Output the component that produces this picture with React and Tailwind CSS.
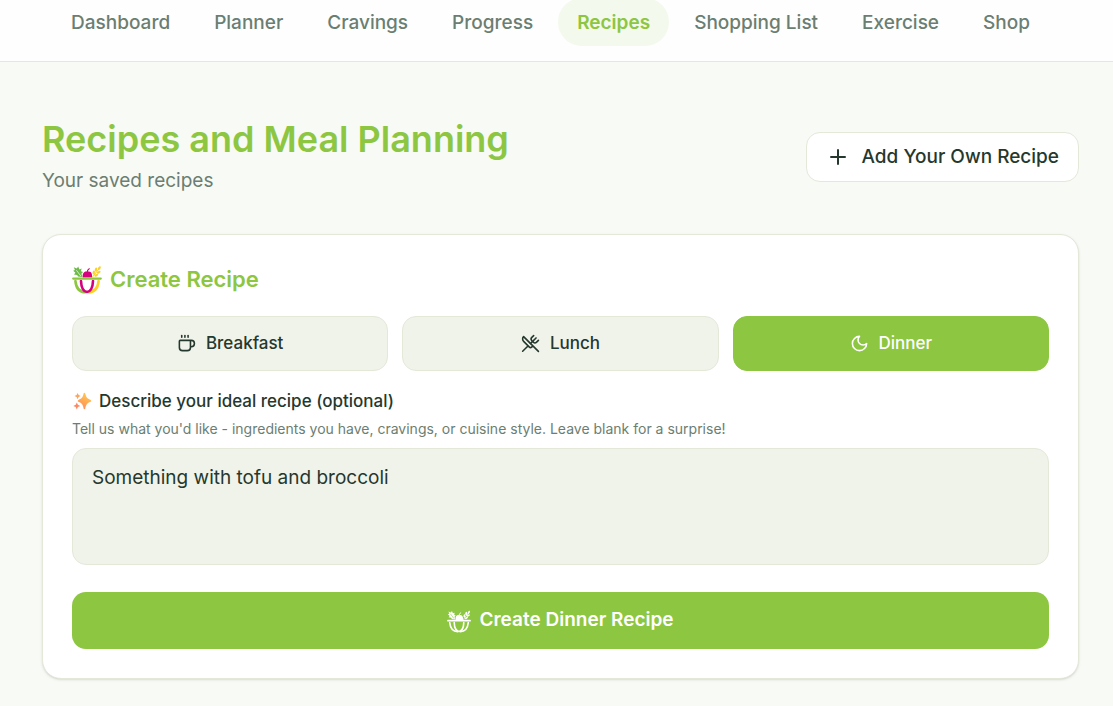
import React, { useState } from 'react';
import { Coffee, Plus, UtensilsCrossed } from 'lucide-react';

const navItems = ['Dashboard', 'Planner', 'Cravings', 'Progress', 'Recipes', 'Shopping List', 'Exercise', 'Shop'];

const MoonIcon = ({ className }) => (
  <svg
    viewBox="0 0 24 24"
    fill="none"
    stroke="currentColor"
    strokeWidth="2"
    strokeLinecap="round"
    strokeLinejoin="round"
    className={className}
    aria-hidden="true"
  >
    <path d="M12 3a6 6 0 0 0 9 9 9 9 0 1 1-9-9Z" />
  </svg>
);

const BowlIcon = ({ className, mono }) => {
  const green = mono ? 'white' : '#8dc63f';
  const leaf = mono ? 'white' : '#6cbb45';
  const pink = mono ? 'white' : '#d6007e';
  const yellow = mono ? 'white' : '#fdd028';
  const vein = mono ? '#8dc641' : 'white';
  const stroke = mono ? 2 : 2.6;
  return (
    <svg viewBox="0 0 30 30" fill="none" className={className} aria-hidden="true">
      {/* leaves */}
      <path
        d="M10.5 13 6 12.6 5.2 11 2 10.4 3.4 8.8 1.2 6.7 2.9 6 1.8 3.2 4.8 4.4 6.2 2.6 7.4 5.4 9.6 4.6 9 7.2 11 8 9.4 9.8Z"
        fill={leaf}
      />
      <path d="m4.4 6.2 4.4 5.8" stroke={vein} strokeWidth="0.7" />
      {/* wheat */}
      <path d="M20.5 13 27 4.9" stroke={yellow} strokeWidth="1" strokeLinecap="round" />
      <g fill={yellow}>
        <ellipse cx="27.3" cy="4.2" rx="1.2" ry="2.2" transform="rotate(30 27.3 4.2)" />
        <ellipse cx="24" cy="5.6" rx="1.2" ry="2.1" transform="rotate(10 24 5.6)" />
        <ellipse cx="21.8" cy="8.6" rx="1.2" ry="2.1" transform="rotate(5 21.8 8.6)" />
        <ellipse cx="26.7" cy="8.2" rx="1.1" ry="2.1" transform="rotate(60 26.7 8.2)" />
        <ellipse cx="24.3" cy="11.2" rx="1.1" ry="2.1" transform="rotate(60 24.3 11.2)" />
      </g>
      {/* fruit */}
      <path
        d="M10.8 13.6c-.6-3.8 1.1-6.2 3.4-6.1.5 0 .8.2 1.2.3.5-.2 1-.4 1.6-.3 2.3.1 3.6 2.8 2.9 6.1Z"
        fill={pink}
      />
      <path d="M15.2 8.2c0-1.7.7-2.8 2-3.5" stroke={pink} strokeWidth="1.2" strokeLinecap="round" />
      {/* bowl */}
      <path d="M3.4 17c.7 7 4.4 11.1 10 11.3" stroke={green} strokeWidth={stroke} strokeLinecap="round" />
      <path d="M26.6 17c-.7 7-4.4 11.1-10 11.3" stroke={yellow} strokeWidth={stroke} strokeLinecap="round" />
      <path
        d="M9 17c.2 5.4 1.8 10.4 6 11 4.2-.6 5.8-5.6 6-11"
        stroke={pink}
        strokeWidth={stroke}
        strokeLinecap="round"
        strokeLinejoin="round"
      />
      {mono && <path d="M15 17v10" stroke={vein} strokeWidth="1" />}
      <path d="M1.2 14.6h27.6" stroke={green} strokeWidth="2.2" strokeLinecap="round" />
    </svg>
  );
};

const SparklesEmoji = ({ className }) => (
  <svg viewBox="0 0 20 20" className={className} aria-hidden="true">
    <defs>
      <linearGradient id="sparkle" x1="0.7" y1="0" x2="0.2" y2="1">
        <stop offset="0" stopColor="#ffcb4c" />
        <stop offset="1" stopColor="#ff8a5c" />
      </linearGradient>
    </defs>
    <path
      d="M12.4 1.8c.5 0 .8.3.9.8.7 3.4 1.7 5 5.3 6.3.9.3.9 1.6 0 1.9-3.6 1.3-4.6 3-5.3 6.6-.2 1-1.5 1-1.7 0-.7-3.6-1.6-5.3-5.2-6.6-.9-.3-.9-1.6 0-1.9 3.6-1.3 4.5-2.9 5.2-6.3.1-.5.4-.8.8-.8Z"
      fill="url(#sparkle)"
    />
    <path d="m5.6 2 1 2.1 2.1 1-2.1 1-1 2.1-1-2.1-2.1-1 2.1-1Z" fill="#fba45c" />
    <path d="m4.8 11.4 1.1 2.4 2.4 1.1-2.4 1.1-1.1 2.4-1.1-2.4-2.4-1.1 2.4-1.1Z" fill="#fb8a64" />
  </svg>
);

const meals = [
  { name: 'Breakfast', icon: Coffee },
  { name: 'Lunch', icon: UtensilsCrossed },
  { name: 'Dinner', icon: MoonIcon },
];

const App = () => {
  const [meal, setMeal] = useState('Dinner');
  const [description, setDescription] = useState('Something with tofu and broccoli');

  return (
    <div className="min-h-screen overflow-hidden bg-[#f8faf5] font-['Inter',sans-serif] text-[#25382e]">
      <header className="-mt-0.5 border-b border-[#e4e8d8] bg-[#fefefe] pb-[15px]">
        <nav className="flex justify-center gap-[6px] pr-3">
          {navItems.map((item) => (
            <a
              key={item}
              href="#"
              className={`flex h-12 items-center whitespace-nowrap rounded-full px-[19px] pt-0.5 text-[19px] ${
                item === 'Recipes' ? 'bg-[#f3f9ec] font-semibold text-[#8dc641]' : 'font-medium text-[#6b7e72]'
              }`}
            >
              {item}
            </a>
          ))}
        </nav>
      </header>

      <main className="pb-7 pl-[42px] pr-[34px] pt-[53px]">
        <div className="mb-[39px] flex items-center justify-between">
          <div>
            <h1 className="text-[36px] font-semibold leading-[48px] text-[#8dc641]">Recipes and Meal Planning</h1>
            <p className="mt-1 text-[19px] leading-7 text-[#6b7e72]">Your saved recipes</p>
          </div>
          <button
            type="button"
            className="mt-1 flex h-[50px] items-center gap-3 rounded-[14px] border border-[#e4e8d8] bg-white px-[19px] text-[19px] font-medium"
          >
            <Plus className="size-6" strokeWidth={2} />
            Add Your Own Recipe
          </button>
        </div>

        <section className="rounded-[19px] border border-[#e4e8d8] bg-white p-[29px] shadow-sm">
          <h2 className="flex items-center gap-2 text-[22px] font-semibold leading-[30px] text-[#8dc641]">
            <BowlIcon className="size-[30px]" />
            Create Recipe
          </h2>

          <div className="mt-[22px] grid grid-cols-3 gap-[14px]">
            {meals.map(({ name, icon: Icon }) => (
              <button
                key={name}
                type="button"
                aria-pressed={meal === name}
                onClick={() => setMeal(name)}
                className={`flex h-[55px] items-center justify-center gap-[10px] rounded-[14px] border text-[17px] font-medium ${
                  meal === name ? 'border-[#8dc641] bg-[#8dc641] text-white' : 'border-[#e4e8d8] bg-[#f0f3ea]'
                }`}
              >
                <Icon className="size-[19px]" />
                {name}
              </button>
            ))}
          </div>

          <label htmlFor="description" className="mt-[18px] flex items-center gap-[7px] text-[17px] font-medium leading-6">
            <SparklesEmoji className="size-5" />
            Describe your ideal recipe (optional)
          </label>
          <p className="mt-1 text-[14px] leading-6 text-[#6b7e72]">
            Tell us what you'd like - ingredients you have, cravings, or cuisine style. Leave blank for a surprise!
          </p>
          <textarea
            id="description"
            value={description}
            onChange={(e) => setDescription(e.target.value)}
            className="mt-[7px] block h-[117px] w-full resize-none rounded-[14px] border border-[#e4e8d8] bg-[#f0f3ea] px-[19px] py-[15px] text-[19px] leading-7 outline-none"
          />
          <button
            type="button"
            className="mt-[27px] flex h-[57px] w-full items-center justify-center gap-2 rounded-[14px] bg-[#8dc641] text-[19px] font-semibold text-white"
          >
            <BowlIcon className="size-6" mono />
            Create {meal} Recipe
          </button>
        </section>
      </main>
    </div>
  );
};

export default App;
